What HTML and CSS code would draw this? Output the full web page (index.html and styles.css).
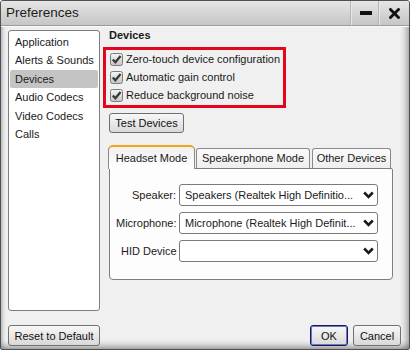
FILE: index.html
```html
<!DOCTYPE html>
<html>
<head>
<meta charset="utf-8">
<link rel="stylesheet" href="styles.css">
</head>
<body>
<div class="window">
  <div class="titlebar">
    <span class="title">Preferences</span>
    <div class="tb-btn min"><svg width="12" height="4" viewBox="0 0 12 4"><rect x="0" y="0" width="12" height="4" fill="#111"/></svg></div>
    <div class="tb-btn close"><svg width="11" height="11" viewBox="0 0 11 11"><path d="M1.5 1.5 L9.5 9.5 M9.5 1.5 L1.5 9.5" stroke="#111" stroke-width="2.8" stroke-linecap="square"/></svg></div>
  </div>
  <div class="body">
    <div class="panes">
      <ul class="nav">
        <li>Application</li>
        <li>Alerts &amp; Sounds</li>
        <li class="sel">Devices</li>
        <li>Audio Codecs</li>
        <li>Video Codecs</li>
        <li>Calls</li>
      </ul>
      <div class="right">
        <div class="heading">Devices</div>
        <div class="redbox">
          <label class="chk"><svg class="cb" width="13" height="13" viewBox="0 0 13 13"><defs><linearGradient id="g" x1="0" y1="0" x2="0" y2="1"><stop offset="0" stop-color="#f6f6f6"/><stop offset="1" stop-color="#c4c4c4"/></linearGradient></defs><rect x="0.5" y="0.5" width="12" height="12" rx="2" fill="url(#g)" stroke="#7c7c7c"/><path d="M2.8 6.4 L5.4 9.3 L10.6 3" fill="none" stroke="#3a3a3a" stroke-width="2.3"/></svg><span>Zero-touch device configuration</span></label>
          <label class="chk"><svg class="cb" width="13" height="13" viewBox="0 0 13 13"><rect x="0.5" y="0.5" width="12" height="12" rx="2" fill="url(#g)" stroke="#7c7c7c"/><path d="M2.8 6.4 L5.4 9.3 L10.6 3" fill="none" stroke="#3a3a3a" stroke-width="2.3"/></svg><span>Automatic gain control</span></label>
          <label class="chk"><svg class="cb" width="13" height="13" viewBox="0 0 13 13"><rect x="0.5" y="0.5" width="12" height="12" rx="2" fill="url(#g)" stroke="#7c7c7c"/><path d="M2.8 6.4 L5.4 9.3 L10.6 3" fill="none" stroke="#3a3a3a" stroke-width="2.3"/></svg><span>Reduce background noise</span></label>
        </div>
        <button class="btn test">Test Devices</button>
        <div class="tabs">
          <div class="tab active t1">Headset Mode</div>
          <div class="tab t2">Speakerphone Mode</div>
          <div class="tab t3">Other Devices</div>
        </div>
        <div class="panel">
          <span class="lbl">Speaker:</span>
          <div class="select"><span>Speakers (Realtek High Definitio...</span><svg width="11" height="8" viewBox="0 0 11 8"><path d="M1.2 1.5 L5.5 5.8 L9.8 1.5" fill="none" stroke="#1a1a1a" stroke-width="2.6"/></svg></div>
          <span class="lbl">Microphone:</span>
          <div class="select"><span>Microphone (Realtek High Definit...</span><svg width="11" height="8" viewBox="0 0 11 8"><path d="M1.2 1.5 L5.5 5.8 L9.8 1.5" fill="none" stroke="#1a1a1a" stroke-width="2.6"/></svg></div>
          <span class="lbl hid">HID Device</span>
          <div class="select"><span></span><svg width="11" height="8" viewBox="0 0 11 8"><path d="M1.2 1.5 L5.5 5.8 L9.8 1.5" fill="none" stroke="#1a1a1a" stroke-width="2.6"/></svg></div>
        </div>
      </div>
    </div>
    <div class="footer">
      <button class="btn reset">Reset to Default</button>
      <div class="actions">
        <button class="btn ok">OK</button>
        <button class="btn cancel">Cancel</button>
      </div>
    </div>
  </div>
</div>
</body>
</html>
```

FILE: styles.css
```css
* { box-sizing: border-box; }
html, body { margin: 0; padding: 0; }
body {
  width: 410px;
  height: 350px;
  font-family: "Liberation Sans", Arial, sans-serif;
  font-size: 11px;
  color: #1a1a1a;
  background: #fff;
}
.window {
  width: 410px;
  height: 350px;
  border: 1px solid #505050;
  border-radius: 3px 3px 2px 2px;
  background: #f0f0f0;
  display: flex;
  flex-direction: column;
  overflow: hidden;
  box-shadow: inset 0 -7px 6px -4px rgba(0,0,0,0.35), inset -7px 0 6px -4px rgba(0,0,0,0.3), inset 4px 0 4px -3px rgba(0,0,0,0.3);
}
.titlebar {
  height: 25px;
  flex: none;
  display: flex;
  align-items: stretch;
  background: linear-gradient(#e6e6e6, #d2d2d2 60%, #c6c6c6);
  border-bottom: 1px solid #9c9c9c;
}
.title {
  flex: 1;
  font-size: 13.5px;
  line-height: 24px;
  padding-left: 5px;
  color: #1c1c1c;
}
.tb-btn {
  display: flex;
  align-items: center;
  justify-content: center;
  border-left: 1px solid #e8e8e8;
  box-shadow: -1px 0 0 #b4b4b4;
}
.tb-btn.min { width: 28px; }
.tb-btn.close { width: 30px; }
.body {
  flex: 1;
  display: flex;
  flex-direction: column;
  padding: 4px 7px 3px 7px;
  box-shadow: inset 0 1px 0 #fafafa;
}
.panes {
  flex: 1;
  display: flex;
}
.nav {
  list-style: none;
  margin: 0;
  width: 92px;
  padding: 2px 1px;
  background: #fff;
  border: 1px solid #7e7e7e;
  border-radius: 3px;
}
.nav li {
  height: 18.4px;
  line-height: 18.4px;
  padding-left: 5px;
  white-space: nowrap;
  border-radius: 2px;
}
.nav li.sel { background: #c4c4c4; }
.right {
  flex: 1;
  margin-left: 3px;
  display: flex;
  flex-direction: column;
  align-items: flex-start;
}
.heading {
  font-weight: bold;
  line-height: 13px;
  margin: -1px 0 5px 6px;
}
.redbox {
  width: 183px;
  border: 3px solid #e3061d;
  padding: 0 0 1px 4px;
}
.chk {
  display: flex;
  align-items: center;
  height: 18px;
  white-space: nowrap;
}
.cb { margin-right: 3px; flex: none; }
.btn {
  font-family: inherit;
  font-size: 11px;
  color: #111;
  height: 21px;
  padding: 0;
  border: 1px solid #707070;
  border-radius: 3px;
  background: linear-gradient(#f7f7f7, #e9e9e9 50%, #d8d8d8);
}
.test {
  width: 75px;
  height: 20px;
  margin: 5px 0 0 6px;
}
.tabs {
  display: flex;
  align-items: flex-end;
  margin: 12px 0 0 5px;
  height: 23px;
}
.tab {
  height: 20px;
  line-height: 19px;
  text-align: center;
  border: 1px solid #8a8a8a;
  border-bottom: none;
  border-radius: 3px 3px 0 0;
  background: linear-gradient(#fbfbfb, #eeeeee);
  white-space: nowrap;
}
.tab.active {
  height: 24px;
  line-height: 22px;
  border-top: 2px solid #f2a51a;
  border-radius: 5px 5px 0 0;
  background: linear-gradient(#f0f0f0, #ffffff);
  position: relative;
  z-index: 1;
  margin-bottom: -1px;
}
.t1 { width: 87px; }
.t2 { width: 114px; margin-left: 1px; }
.t3 { width: 79px; margin-left: 2px; }
.panel {
  margin-left: 6px;
  width: 284px;
  height: 112px;
  border: 1px solid #7e7e7e;
  border-radius: 0 2px 4px 4px;
  background: #fdfdfd;
  padding: 15px 13px 0 6px;
  display: grid;
  grid-template-columns: 60px 199px;
  column-gap: 3px;
  row-gap: 6px;
  align-content: start;
  align-items: center;
}
.lbl { text-align: right; white-space: nowrap; }
.lbl.hid { text-align: left; padding-left: 5px; }
.select {
  height: 22px;
  border: 1px solid #7a7a7a;
  border-radius: 3px;
  background: #fff;
  display: flex;
  align-items: center;
  justify-content: space-between;
  padding: 0 3px 0 5px;
  white-space: nowrap;
  overflow: hidden;
}
.select span { overflow: hidden; }
.select svg { flex: none; margin-left: 4px; }
.footer {
  display: flex;
  justify-content: space-between;
  align-items: flex-end;
  margin-top: 13px;
  height: 22px;
}
.reset { width: 92px; }
.actions { display: flex; gap: 5px; margin-right: 1px; }
.ok { width: 38px; border: 1px solid #141a5c; box-shadow: inset 0 0 0 1px #6a78c8; }
.cancel { width: 48px; }
```
